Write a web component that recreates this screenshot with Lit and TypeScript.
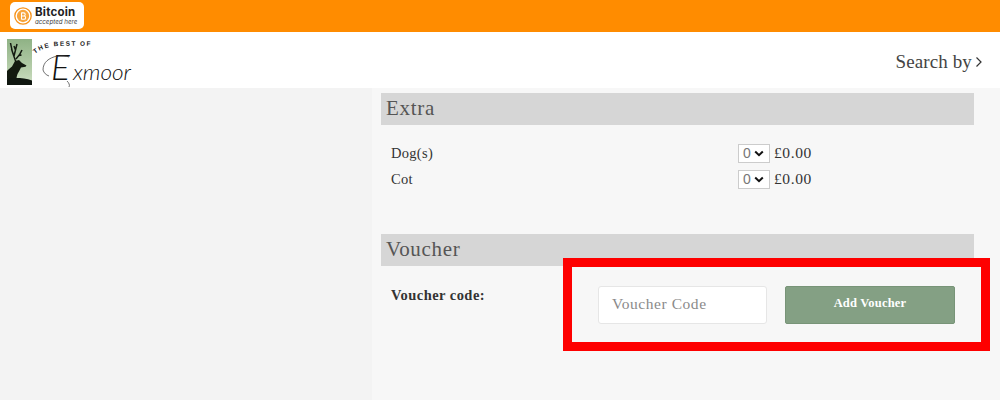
import { LitElement, html, css } from "lit";
import { customElement } from "lit/decorators.js";

@customElement("app-root")
export class AppRoot extends LitElement {
  static styles = css`
    :host { display: block; width: 1000px; height: 400px; overflow: hidden; position: relative; background: #f5f5f5; font-family: "Liberation Serif", serif; color: #333; }
    .top { height: 32px; background: #ff8c00; display: flex; align-items: center; padding-left: 10px; box-sizing: border-box; }
    .badge { width: 74px; height: 27px; margin-top: -1px; background: #fff; border-radius: 5px; display: flex; align-items: center; gap: 3px; padding-left: 4px; box-sizing: border-box; }
    .badge-text { display: flex; flex-direction: column; font-family: "Inter", sans-serif; color: #222; }
    .badge-b { font-size: 11.5px; font-weight: 700; line-height: 11px; letter-spacing: 0.2px; }
    .badge-s { font-size: 6.2px; line-height: 7px; font-style: italic; color: #444; }
    .header { height: 56px; background: #fff; display: flex; align-items: center; justify-content: space-between; padding: 0 17px 0 7px; box-sizing: border-box; }
    .logo { display: block; }
    .logo-t1 { font: bold 6.4px "Liberation Sans", sans-serif; letter-spacing: 1.5px; fill: #222; }
    .logo-t2 { font: italic 300 35px "Lato", sans-serif; fill: #111; }
    .logo-t3 { font: italic 300 22px "Lato", sans-serif; fill: #111; }
    .search { display: flex; align-items: center; gap: 3px; font-size: 19px; letter-spacing: 0.12px; color: #444; padding-top: 3px; }
    .main { display: flex; height: 312px; }
    .side { width: 372px; background: #f3f3f3; flex: none; }
    .content { flex: 1; background: #f7f7f7; padding: 5px 26px 0 9px; box-sizing: border-box; }
    .head { height: 32px; background: #d6d6d6; font-size: 21px; line-height: 30px; padding-left: 5px; letter-spacing: 0.7px; color: #555; }
    .rows { padding: 15px 0 0 10px; height: 109px; box-sizing: border-box; }
    .row { display: flex; align-items: center; height: 26px; font-size: 14.5px; letter-spacing: 0.3px; }
    .row-label { width: 347px; flex: none; }
    .select { width: 32px; height: 19px; background: #fff; border: 1px solid #ccc; box-sizing: border-box; display: flex; align-items: center; justify-content: space-between; padding: 0 5px 0 4px; color: #777; font: 14px "Liberation Sans", sans-serif; }
    .price { margin-left: 4px; font-size: 15.5px; letter-spacing: 0.6px; }
    .voucher { display: flex; align-items: flex-start; padding-top: 20px; }
    .v-label { width: 217px; padding-left: 10px; box-sizing: border-box; flex: none; font-size: 14.5px; font-weight: bold; letter-spacing: 0.45px; line-height: 18px; }
    .input { width: 169px; height: 38px; background: #fff; border: 1px solid #e6e6e6; border-radius: 3px; box-sizing: border-box; margin-right: 18px; padding-left: 13px; font-size: 15.5px; letter-spacing: 0.55px; line-height: 33px; color: #8a8a8a; }
    .btn { width: 170px; height: 38px; background: #84a084; border: 1px solid #789478; border-radius: 2px; box-sizing: border-box; color: #fff; font-size: 12.5px; font-weight: bold; text-align: center; line-height: 32px; letter-spacing: 0.2px; }
    .hl { position: absolute; left: 563px; top: 258px; width: 427px; height: 93px; border: 9px solid #fe0000; box-sizing: border-box; }
  `;

  render() {
    return html`
      <div class="top">
        <div class="badge">
          <svg width="18" height="18" viewBox="0 0 22 22">
            <circle cx="11" cy="11" r="10" fill="#fff" stroke="#f7931a" stroke-width="1.6"/>
            <circle cx="11" cy="11" r="7.5" fill="#f7a53c"/>
            <path d="M9.2 6.8v8.4M9.2 7.2h2.6a1.9 1.9 0 0 1 0 3.8H9.2M9.2 11h3a2 2 0 0 1 0 4H9.2" fill="none" stroke="#fff" stroke-width="1.3"/>
          </svg>
          <div class="badge-text">
            <span class="badge-b">Bitcoin</span>
            <span class="badge-s">accepted here</span>
          </div>
        </div>
      </div>
      <div class="header">
        <svg class="logo" width="128" height="56" viewBox="0 0 128 56">
          <defs>
            <linearGradient id="g" x1="0" y1="0" x2="0" y2="1">
              <stop offset="0" stop-color="#8fb285"/>
              <stop offset="0.75" stop-color="#bcd2b0"/>
              <stop offset="1" stop-color="#cfe0c6"/>
            </linearGradient>
          </defs>
          <rect x="0" y="7" width="25" height="46" fill="url(#g)"/>
          <path d="M9 30C7 25 5 21 3.500 11M6.200 22L4.500 17M7 24L10 12M8.500 18L7 14M9 27C11 25 13 23 15 18M12 23.500L14.500 23" fill="none" stroke="#131a10" stroke-width="1.5"/>
          <path d="M8 29l4-1 3 3 4.500 2.500-1 1.200-4.500.8-1.500 3-2 3.500-1 3.500 2 3H1.500l-1.500-2v-7.500l2-2 3-2.500z" fill="#131a10"/>
          <path d="M0 46.500c3-1 6-.5 9-.5 5 0 11 .5 16 2.500V53H0z" fill="#101710"/>
          <path id="tb" d="M28 22C36 15 46 14 55 14 66 13.600 76 13.600 90 14" fill="none"/>
          <text class="logo-t1"><textPath href="#tb">THE BEST OF</textPath></text>
          <text class="logo-t2" x="44" y="48">E</text>
          <text class="logo-t3" x="66" y="48" textLength="58" lengthAdjust="spacingAndGlyphs">xmoor</text>
          <path d="M36 38C36 30 42 26 50 24c5-1 9 0 12 1M36 38c1 3 3 5 6 6M60 49c2 2 3 4 2 6" fill="none" stroke="#333" stroke-width="0.7"/>
        </svg>
        <div class="search">
          <span>Search by</span>
          <svg width="8" height="12" viewBox="0 0 8 12"><path d="M1.500 1.500L6 6 1.500 10.500" fill="none" stroke="#333" stroke-width="1.2"/></svg>
        </div>
      </div>
      <div class="main">
        <div class="side"></div>
        <div class="content">
          <div class="head">Extra</div>
          <div class="rows">
            ${["Dog(s)", "Cot"].map(
              (l) => html`
                <div class="row">
                  <span class="row-label">${l}</span>
                  <span class="select">0
                    <svg width="10" height="7" viewBox="0 0 10 7"><path d="M1.200 1.500L5 5.200 8.800 1.500" fill="none" stroke="#111" stroke-width="2"/></svg>
                  </span>
                  <span class="price">£0.00</span>
                </div>
              `
            )}
          </div>
          <div class="head">Voucher</div>
          <div class="voucher">
            <span class="v-label">Voucher code:</span>
            <div class="input">Voucher Code</div>
            <div class="btn">Add Voucher</div>
          </div>
        </div>
      </div>
      <div class="hl"></div>
    `;
  }
}
